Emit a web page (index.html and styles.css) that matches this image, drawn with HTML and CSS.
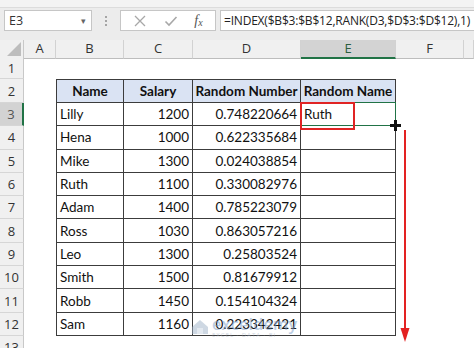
FILE: index.html
```html
<!DOCTYPE html>
<html>
<head>
<meta charset="utf-8">
<link rel="stylesheet" href="styles.css">
</head>
<body>
<div class="app">
  <div class="topstrip"></div>
  <div class="fbar">
    <div class="namebox"><span class="nb-text">E3</span><span class="nb-arrow">▾</span></div>
    <div class="dots"><i></i><i></i><i></i></div>
    <div class="fxbox">
      <svg class="ico" width="14" height="14" viewBox="0 0 14 14"><path d="M2 2 L12 12 M12 2 L2 12" stroke="#a8a8a8" stroke-width="1.3" fill="none"/></svg>
      <svg class="ico" width="14" height="14" viewBox="0 0 14 14"><path d="M1.5 7.5 L5 11 L12.5 3" stroke="#a8a8a8" stroke-width="1.6" fill="none"/></svg>
      <span class="fx">f<sub>x</sub></span>
    </div>
    <div class="formula">=INDEX($B$3:$B$12,RANK(D3,$D$3:$D$12),1)</div>
  </div>
  <div class="sheet">
    <div class="row hdr">
      <div class="corner"><svg width="14" height="14" viewBox="0 0 14 14"><path d="M14 0 L14 14 L0 14 Z" fill="#bdbdbd"/></svg></div>
      <div class="ch">A</div><div class="ch">B</div><div class="ch">C</div><div class="ch">D</div><div class="ch sel">E</div><div class="ch">F</div><div class="ch"></div>
    </div>
    <div class="row r1">
      <div class="rh">1</div><div class="c"></div><div class="c"></div><div class="c"></div><div class="c"></div><div class="c"></div><div class="c"></div><div class="c"></div>
    </div>
    <div class="row r2">
      <div class="rh">2</div><div class="c"></div>
      <div class="c t th first">Name</div><div class="c t th">Salary</div><div class="c t th">Random Number</div><div class="c t th">Random Name</div>
      <div class="c"></div><div class="c"></div>
    </div>
    <div class="row">
      <div class="rh sel">3</div><div class="c"></div>
      <div class="c t first">Lilly</div><div class="c t num">1200</div><div class="c t num">0.748220664</div>
      <div class="c t active">Ruth<span class="selbox"></span><span class="redbox"></span><span class="handle"></span></div>
      <div class="c"></div><div class="c"></div>
    </div>
    <div class="row">
      <div class="rh">4</div><div class="c"></div>
      <div class="c t first">Hena</div><div class="c t num">1000</div><div class="c t num">0.622335684</div><div class="c t"></div>
      <div class="c"></div><div class="c"></div>
    </div>
    <div class="row">
      <div class="rh">5</div><div class="c"></div>
      <div class="c t first">Mike</div><div class="c t num">1300</div><div class="c t num">0.024038854</div><div class="c t"></div>
      <div class="c"></div><div class="c"></div>
    </div>
    <div class="row">
      <div class="rh">6</div><div class="c"></div>
      <div class="c t first">Ruth</div><div class="c t num">1100</div><div class="c t num">0.330082976</div><div class="c t"></div>
      <div class="c"></div><div class="c"></div>
    </div>
    <div class="row">
      <div class="rh">7</div><div class="c"></div>
      <div class="c t first">Adam</div><div class="c t num">1400</div><div class="c t num">0.785223079</div><div class="c t"></div>
      <div class="c"></div><div class="c"></div>
    </div>
    <div class="row">
      <div class="rh">8</div><div class="c"></div>
      <div class="c t first">Ross</div><div class="c t num">1030</div><div class="c t num">0.863057216</div><div class="c t"></div>
      <div class="c"></div><div class="c"></div>
    </div>
    <div class="row">
      <div class="rh">9</div><div class="c"></div>
      <div class="c t first">Leo</div><div class="c t num">1300</div><div class="c t num">0.25803524</div><div class="c t"></div>
      <div class="c"></div><div class="c"></div>
    </div>
    <div class="row">
      <div class="rh">10</div><div class="c"></div>
      <div class="c t first">Smith</div><div class="c t num">1500</div><div class="c t num">0.81679912</div><div class="c t"></div>
      <div class="c"></div><div class="c"></div>
    </div>
    <div class="row">
      <div class="rh">11</div><div class="c"></div>
      <div class="c t first">Robb</div><div class="c t num">1450</div><div class="c t num">0.154104324</div><div class="c t"></div>
      <div class="c"></div><div class="c"></div>
    </div>
    <div class="row">
      <div class="rh">12</div><div class="c"></div>
      <div class="c t first">Sam</div><div class="c t num">1160</div><div class="c t num">0.223342421</div><div class="c t"></div>
      <div class="c"></div><div class="c"></div>
    </div>
    <div class="row">
      <div class="rh">13</div><div class="c"></div><div class="c"></div><div class="c"></div><div class="c"></div><div class="c"></div><div class="c"></div><div class="c"></div>
    </div>
    <svg class="arrow" width="12" height="214" viewBox="0 0 12 214"><path d="M6 0 L6 200" stroke="#e32222" stroke-width="2"/><path d="M1.5 198 L10.5 198 L6 212 Z" fill="#e32222"/></svg>
    <div class="watermark">
      <svg width="18" height="16" viewBox="0 0 18 16"><path d="M1 8 L9 1 L17 8 L17 15 L1 15 Z" fill="#9fb3c8"/><path d="M6 15 L6 9 L12 9 L12 15" fill="#c8d5e2"/></svg>
      <div class="wm-text"><span class="wm-big">exceldemy</span><span class="wm-small">EXCEL · DATA · BI</span></div>
    </div>
  </div>
</div>
</body>
</html>
```
FILE: styles.css
```css
* { box-sizing: border-box; }
html, body { margin: 0; padding: 0; }
body { width: 474px; height: 348px; overflow: hidden; background: #fff; font-family: "Lato", "Liberation Sans", sans-serif; }
.app { width: 474px; height: 348px; display: flex; flex-direction: column; background: #fff; overflow: hidden; }
.app > * { flex-shrink: 0; }
.topstrip { height: 8px; background: #f3f3f3; border-bottom: 1px solid #dcdcdc; }
.fbar { height: 32px; background: #ececec; display: flex; align-items: flex-start; padding-top: 2px; }
.namebox { margin-left: 4px; width: 88px; height: 21px; background: #fff; border: 1px solid #c6c6c6; display: flex; align-items: center; justify-content: space-between; padding: 0 5px 0 4px; font-family: "Open Sans", "Liberation Sans", sans-serif; font-size: 12.5px; color: #333; }
.nb-arrow { font-size: 9px; color: #666; }
.dots { width: 28px; height: 21px; display: flex; flex-direction: column; align-items: center; justify-content: center; gap: 2px; }
.dots i { display: block; width: 2px; height: 2px; background: #a5a5a5; }
.fxbox { width: 96px; height: 21px; background: #fff; border: 1px solid #c6c6c6; display: flex; align-items: center; justify-content: space-around; padding: 0 4px; }
.fx { font-family: "Liberation Serif", serif; font-style: italic; font-size: 14px; color: #555; }
.fx sub { font-size: 10px; vertical-align: -1px; }
.formula { flex: 1; height: 21px; margin-left: 4px; background: #fff; border: 1px solid #c6c6c6; border-right: 0; font-family: "Open Sans", "Liberation Sans", sans-serif; font-size: 12px; color: #222; line-height: 19px; padding-left: 3px; white-space: nowrap; overflow: hidden; letter-spacing: -0.2px; }
.sheet { position: relative; flex: 1 0 auto; display: flex; flex-direction: column; }
.row { flex-shrink: 0; display: grid; grid-template-columns: 24px 32px 68px 69px 108px 95px 68px 10px; height: 23.3px; }
.row.hdr { height: 18px; background: #f0f0f0; }
.row.r1 { height: 21px; }
.row.r2 { height: 24px; }
.corner { background: #f0f0f0; border-right: 1px solid #c8c8c8; border-bottom: 1px solid #bdbdbd; display: flex; align-items: flex-end; justify-content: flex-end; padding: 0 2px 2px 0; }
.ch { border-right: 1px solid #d2d2d2; border-bottom: 1px solid #bdbdbd; font-family: "Open Sans", "Liberation Sans", sans-serif; font-size: 13px; color: #333; text-align: center; line-height: 17px; }
.ch.sel { background: #d3d3d3; border-bottom: 2px solid #217346; color: #2b5e40; }
.rh { background: #f0f0f0; border-right: 1px solid #c8c8c8; border-bottom: 1px solid #d6d6d6; font-family: "Open Sans", "Liberation Sans", sans-serif; font-size: 13px; color: #333; display: flex; align-items: center; justify-content: center; }
.rh.sel { background: #d3d3d3; border-right: 2px solid #217346; color: #555; }
.c { font-size: 13.5px; color: #111; white-space: nowrap; padding: 0 3px; display: flex; align-items: center; }
.t { border-right: 1px solid #3c3c3c; border-bottom: 1px solid #3c3c3c; }
.t.first { border-left: 1px solid #3c3c3c; }
.th { border-top: 1px solid #3c3c3c; background: #dae3f3; font-weight: bold; justify-content: center; }
.num { justify-content: flex-end; }
.active { position: relative; }
.selbox { position: absolute; left: -1px; top: -1px; right: -1px; bottom: -1px; border: 1px solid #217346; pointer-events: none; }
.redbox { position: absolute; left: -1px; top: -1px; width: 55px; height: 28px; border: 2px solid #e02424; pointer-events: none; }
.handle { position: absolute; right: -6px; bottom: -6px; width: 11px; height: 11px; background:
  linear-gradient(#111, #111) center / 3px 11px no-repeat,
  linear-gradient(#111, #111) center / 11px 3px no-repeat; }
.arrow { position: absolute; left: 399px; top: 90px; }
.watermark { position: absolute; left: 191px; top: 276px; display: flex; align-items: center; gap: 3px; opacity: 0.5; }
.wm-text { display: flex; flex-direction: column; line-height: 1; }
.wm-big { font-family: "Open Sans", sans-serif; font-size: 16px; font-weight: 600; color: #7a9cc8; letter-spacing: 0.3px; }
.wm-small { font-family: "Open Sans", sans-serif; font-size: 6px; color: #9fb0c4; letter-spacing: 1px; }
```
